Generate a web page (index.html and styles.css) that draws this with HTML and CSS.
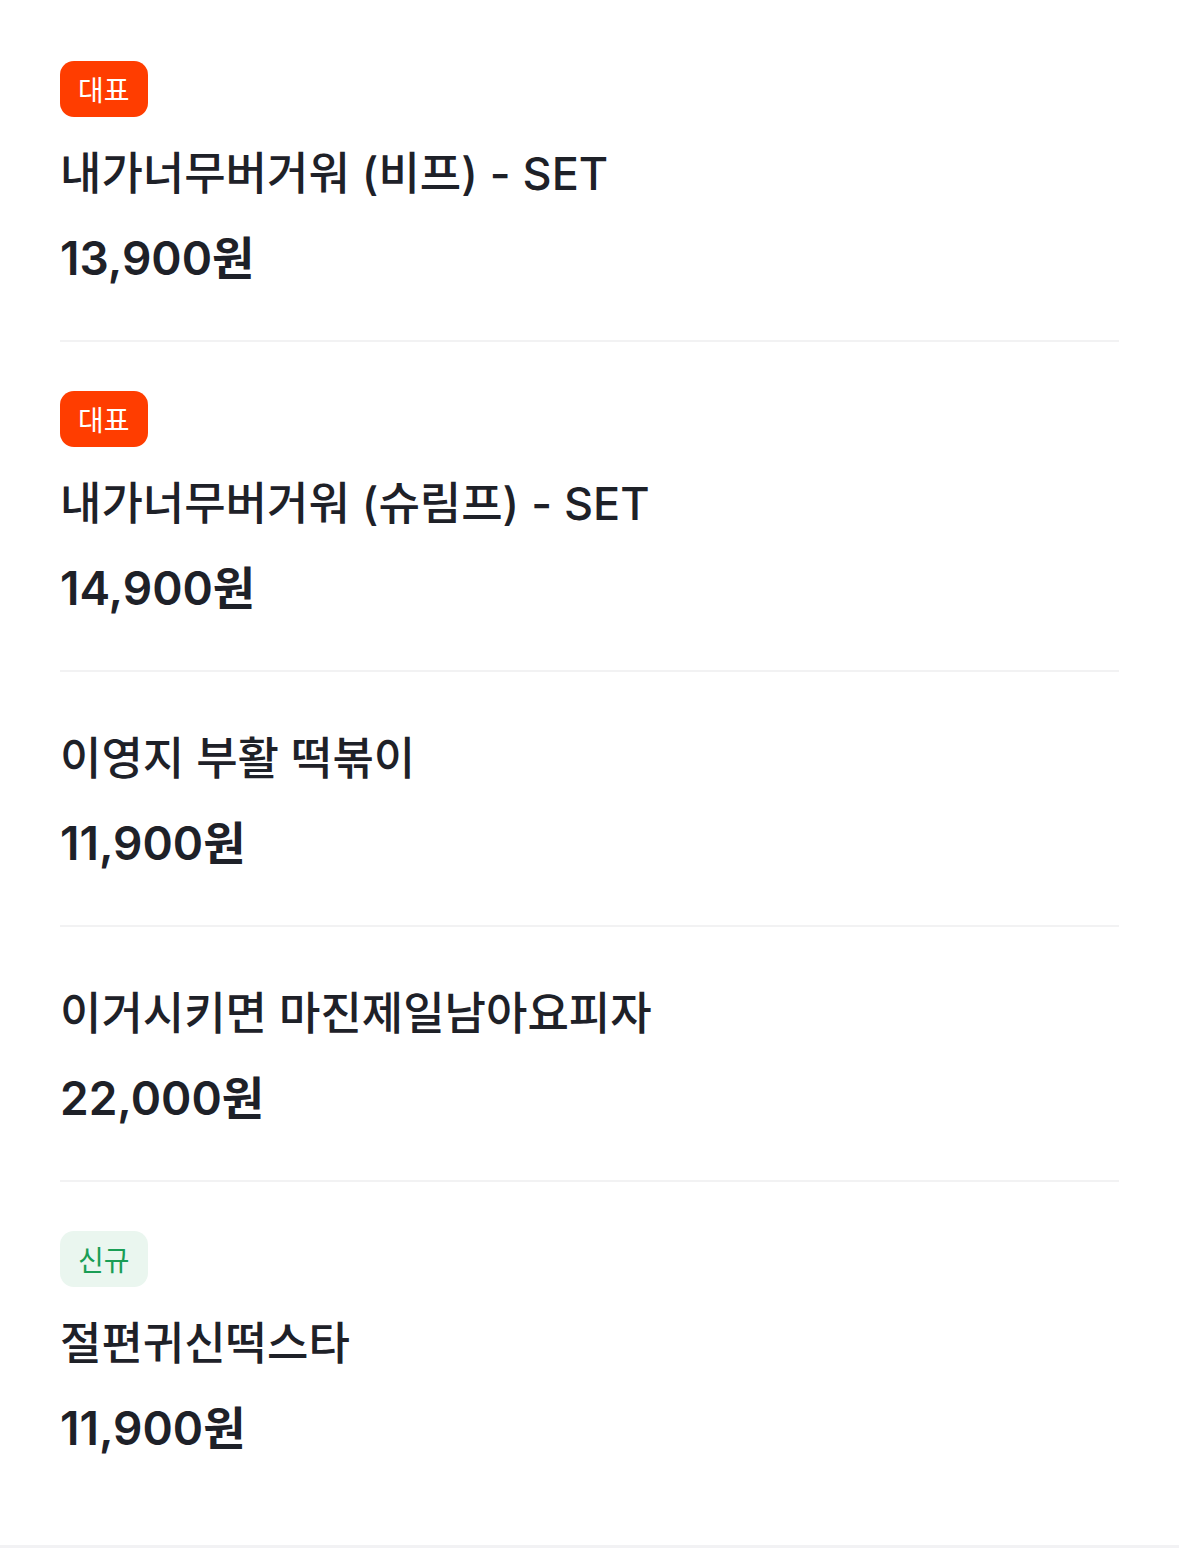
FILE: index.html
```html
<!DOCTYPE html>
<html lang="ko">
<head>
  <meta charset="UTF-8" />
  <meta name="viewport" content="width=device-width, initial-scale=1.0" />
  <title>메뉴</title>
  <link rel="stylesheet" href="styles.css">
</head>
<body>
  <ul class="menu-list">
    <li class="menu-item">
      <span class="badge badge-best">대표</span>
      <div class="menu-name">내가너무버거워 (비프) - SET</div>
      <div class="menu-price">13,900원</div>
    </li>
    <li class="menu-item">
      <span class="badge badge-best">대표</span>
      <div class="menu-name">내가너무버거워 (슈림프) - SET</div>
      <div class="menu-price">14,900원</div>
    </li>
    <li class="menu-item">
      <div class="menu-name">이영지 부활 떡볶이</div>
      <div class="menu-price">11,900원</div>
    </li>
    <li class="menu-item">
      <div class="menu-name">이거시키면 마진제일남아요피자</div>
      <div class="menu-price">22,000원</div>
    </li>
    <li class="menu-item">
      <span class="badge badge-new">신규</span>
      <div class="menu-name">절편귀신떡스타</div>
      <div class="menu-price">11,900원</div>
    </li>
  </ul>
  <div class="section-divider"></div>
</body>
</html>
```

FILE: styles.css
```css
* { box-sizing: border-box; }
body {
  margin: 0;
  font-family: 'Inter', 'Noto Sans CJK KR', sans-serif;
  background: #fff;
  color: #1e2128;
}
.menu-list {
  list-style: none;
  margin: 0;
  padding: 12px 60px 35px;
}
.menu-item {
  display: flex;
  flex-direction: column;
  align-items: flex-start;
  padding: 49px 0 46px;
  border-bottom: 2px solid #f2f2f3;
}
.menu-item:last-child { border-bottom: none; }
.badge {
  display: inline-flex;
  align-items: center;
  justify-content: center;
  height: 56px;
  padding: 0 18px;
  margin-bottom: 19px;
  border-radius: 14px;
  font-size: 28px;
  font-weight: 400;
}
.badge-best {
  background: #ff3d00;
  color: #fff;
}
.badge-new {
  background: #eaf6ef;
  color: #1a9e55;
}
.menu-name {
  margin-top: 2px;
  font-size: 45px;
  font-weight: 500;
  line-height: 72px;
}
.menu-price {
  margin-top: 12px;
  font-size: 46px;
  font-weight: 600;
  line-height: 72px;
}
.section-divider {
  height: 3px;
  background: #f2f2f4;
}
```
